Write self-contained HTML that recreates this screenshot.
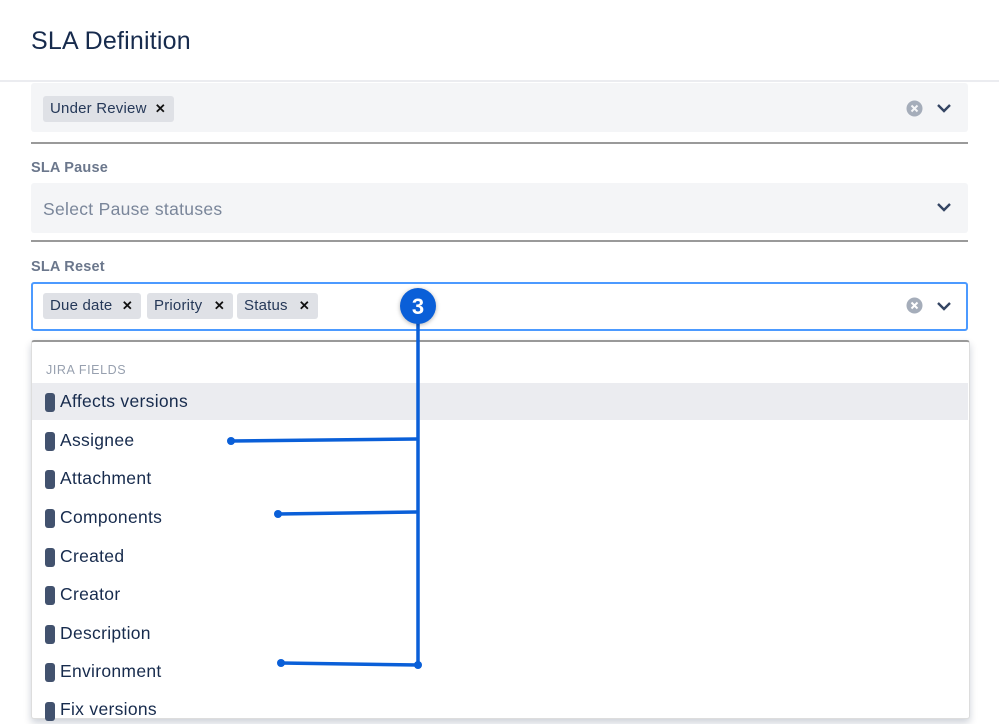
<!DOCTYPE html>
<html><head><style>
body{margin:0;width:999px;height:724px;position:relative;overflow:hidden;background:#fff;font-family:"Liberation Sans",sans-serif;color:#172b4d}
.a{position:absolute}
.field{position:absolute;left:31px;width:937px;background:#f4f5f7;border-radius:3px}
.line{position:absolute;left:31px;width:937px;height:2px;background:#9a9a9a}
.lbl{position:absolute;left:31px;font-size:14.5px;font-weight:bold;color:#6b778c;letter-spacing:.2px}
.tag{position:absolute;height:26px;line-height:26px;background:#dfe1e6;border-radius:3px;font-size:15px;color:#253858;padding-left:7px;letter-spacing:.2px}
.tag b{position:absolute;right:8px;font-size:13px;color:#111}
.item{position:absolute;left:60px;font-size:17.5px;color:#172b4d;letter-spacing:.3px}
.ic{position:absolute;left:45px;width:10px;height:19px;background:#42526e;border-radius:3px}
</style></head><body>
<div class="a" style="left:0;top:0;width:999px;height:80px;border-bottom:2px solid #ebecf0"></div>
<div class="a" style="left:31px;top:27px;font-size:25px;color:#172b4d;letter-spacing:.2px">SLA Definition</div>

<div class="field" style="top:83px;height:49px"></div>
<div class="tag" style="left:43px;top:96px;width:124px">Under Review<b>✕</b></div>
<svg class="a" style="left:906px;top:100px" width="17" height="17"><circle cx="8.5" cy="8.5" r="8" fill="#a5adba"/><path d="M5.5 5.5l6 6M11.5 5.5l-6 6" stroke="#f4f5f7" stroke-width="2"/></svg>
<svg class="a" style="left:936px;top:102px" width="16" height="12"><path d="M2 3l6 6 6-6" stroke="#344563" stroke-width="2.4" fill="none"/></svg>
<div class="line" style="top:142px"></div>

<div class="lbl" style="top:160px">SLA Pause</div>
<div class="field" style="top:183px;height:50px"></div>
<div class="a" style="left:43px;top:199px;font-size:17.5px;color:#7a869a;letter-spacing:.3px">Select Pause statuses</div>
<svg class="a" style="left:936px;top:201px" width="16" height="12"><path d="M2 3l6 6 6-6" stroke="#344563" stroke-width="2.4" fill="none"/></svg>
<div class="line" style="top:240px"></div>

<div class="lbl" style="top:259px">SLA Reset</div>
<div class="a" style="left:31px;top:282px;width:933px;height:45px;border:2px solid #4c9aff;border-radius:3px;background:#fff"></div>
<div class="tag" style="left:43px;top:293px;width:91px">Due date<b>✕</b></div>
<div class="tag" style="left:147px;top:293px;width:79px">Priority<b>✕</b></div>
<div class="tag" style="left:237px;top:293px;width:74px">Status<b>✕</b></div>
<svg class="a" style="left:906px;top:297px" width="17" height="17"><circle cx="8.5" cy="8.5" r="8" fill="#a5adba"/><path d="M5.5 5.5l6 6M11.5 5.5l-6 6" stroke="#fff" stroke-width="2"/></svg>
<svg class="a" style="left:936px;top:300px" width="16" height="12"><path d="M2 3l6 6 6-6" stroke="#344563" stroke-width="2.4" fill="none"/></svg>

<div class="a" style="left:31px;top:340px;width:937px;height:376px;border-top:2px solid #999;border-left:1px solid #ddd;border-right:1px solid #ddd;border-bottom:1px solid #ddd;border-radius:3px;box-shadow:0 4px 8px rgba(9,30,66,.2);background:#fff"></div>
<div class="a" style="left:46px;top:363px;font-size:12.5px;color:#97a0af;letter-spacing:.6px">JIRA FIELDS</div>
<div class="a" style="left:32px;top:383px;width:936px;height:37px;background:#ebecf0"></div>
<div class="ic" style="top:393px"></div><div class="item" style="top:391px">Affects versions</div>
<div class="ic" style="top:432px"></div><div class="item" style="top:430px">Assignee</div>
<div class="ic" style="top:470px"></div><div class="item" style="top:468px">Attachment</div>
<div class="ic" style="top:509px"></div><div class="item" style="top:507px">Components</div>
<div class="ic" style="top:548px"></div><div class="item" style="top:546px">Created</div>
<div class="ic" style="top:586px"></div><div class="item" style="top:584px">Creator</div>
<div class="ic" style="top:625px"></div><div class="item" style="top:623px">Description</div>
<div class="ic" style="top:663px"></div><div class="item" style="top:661px">Environment</div>
<div class="ic" style="top:702px"></div><div class="item" style="top:699px">Fix versions</div>

<svg class="a" style="left:0;top:0" width="999" height="724">
<g stroke="#0a5fd8" stroke-width="3.5" fill="none" stroke-linecap="round">
<line x1="418" y1="306" x2="418" y2="665"/>
<line x1="231" y1="441" x2="416" y2="439"/>
<line x1="278" y1="514" x2="416" y2="512"/>
<line x1="281" y1="663" x2="418" y2="665"/>
</g>
<g fill="#0a5fd8"><circle cx="231" cy="441" r="4"/><circle cx="278" cy="514" r="4"/><circle cx="281" cy="663" r="4"/><circle cx="418" cy="665" r="4"/>
<circle cx="418" cy="306" r="18" style="filter:drop-shadow(0 1px 2px rgba(0,0,0,.3))"/></g>
<text x="418" y="314" text-anchor="middle" fill="#fff" font-family="Liberation Sans" font-weight="bold" font-size="22">3</text>
</svg>
</body></html>
